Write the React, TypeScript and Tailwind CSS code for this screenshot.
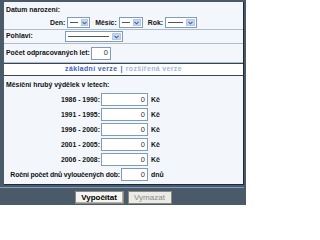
import React from "react";

const font = { fontFamily: '"Liberation Sans", Arial, sans-serif' };

function Select({ w, line }: { w: string; line?: boolean }) {
  return (
    <div className={`${w} h-[11px] flex items-stretch border border-[#7f9db9] bg-white`}>
      <div className="flex-1 flex items-center px-[2px]">
        <div className={`${line ? "w-full" : "w-[8px] mx-auto"} h-px bg-[#555]`} />
      </div>
      <div className="w-[9px] m-px bg-[#c6d6f5] border border-[#b3c6ee] flex items-center justify-center">
        <svg width="5" height="4" viewBox="0 0 5 4">
          <path d="M0.5 0.8 L2.5 2.8 L4.5 0.8" stroke="#4d6185" strokeWidth="1.1" fill="none" />
        </svg>
      </div>
    </div>
  );
}

function Num({ w }: { w: string }) {
  return (
    <div className={`${w} h-[13px] border border-[#7f9db9] bg-white flex items-center justify-end pr-[2px] text-[#333] font-normal text-[7.5px]`}>
      0
    </div>
  );
}

function Earn({ label }: { label: string }) {
  return (
    <div className="flex items-center h-[15px]">
      <div className="w-[95px] text-right pr-[1px]">{label}</div>
      <Num w="w-[47px]" />
      <div className="ml-[3px]">Kč</div>
    </div>
  );
}

export default function App() {
  return (
    <div className="w-[246px] h-[205px] bg-[#4a5a68] pt-[2px] pl-[4px] overflow-hidden text-[6.9px] font-bold text-[#111] whitespace-nowrap" style={font}>
      <div className="w-[240px] bg-[#f3f7fb] border-r border-b border-[#1f2a35]">
        <div className="h-[28px] border-b border-[#aebccb] px-[2px] pt-[3px]">
          <div>Datum narození:</div>
          <div className="flex items-center justify-center gap-[2px] mt-[2px]">
            <span>Den:</span>
            <Select w="w-[23px]" />
            <span className="ml-[3px]">Měsíc:</span>
            <Select w="w-[24px]" />
            <span className="ml-[3px]">Rok:</span>
            <Select w="w-[32px]" line />
          </div>
        </div>
        <div className="h-[14px] border-b border-[#aebccb] px-[2px] flex items-center">
          <div className="w-[59px]">Pohlaví:</div>
          <Select w="w-[58px]" line />
        </div>
        <div className="h-[19px] border-b border-[#aebccb] px-[2px] flex items-center">
          <div className="w-[85px]">Počet odpracovaných let:</div>
          <Num w="w-[20px]" />
        </div>
        <div className="h-[13px] bg-white border-t border-[#3a4650] border-b border-b-[#3a4650] flex items-center justify-center gap-[3px] tracking-[0.4px]">
          <span className="text-[#3d62b8]">základní verze</span>
          <span className="text-[#3d62b8]">|</span>
          <span className="text-[#a3b4e0]">rozšířená verze</span>
        </div>
        <div className="px-[2px] pt-[4px] h-[108px]">
          <div className="mb-[2px]">Měsíční hrubý výdělek v letech:</div>
          <Earn label="1986 - 1990:" />
          <Earn label="1991 - 1995:" />
          <Earn label="1996 - 2000:" />
          <Earn label="2001 - 2005:" />
          <Earn label="2006 - 2008:" />
          <div className="flex items-center h-[15px]">
            <div className="w-[115px] flex justify-end pr-[1px] tracking-[-0.15px]">Roční počet dnů vyloučených dob:</div>
            <Num w="w-[27px]" />
            <div className="ml-[3px]">dnů</div>
          </div>
        </div>
      </div>
      <div className="h-px bg-[#7ea0c8] mt-[2px] -ml-[4px] w-[244px]" />
      <div className="flex justify-center gap-[4px] mt-[3px] -ml-[4px] text-[8px]">
        <button className="w-[49px] h-[13px] bg-[#f4f4f0] border border-[#8a8a80] shadow-[inset_-1px_-1px_0_#b0b0a8] text-black font-bold leading-none">Vypočítat</button>
        <button className="w-[44px] h-[13px] bg-[#ecebe6] border border-[#8a8a80] text-[#8a8a8a] font-normal leading-none">Vymazat</button>
      </div>
    </div>
  );
}
